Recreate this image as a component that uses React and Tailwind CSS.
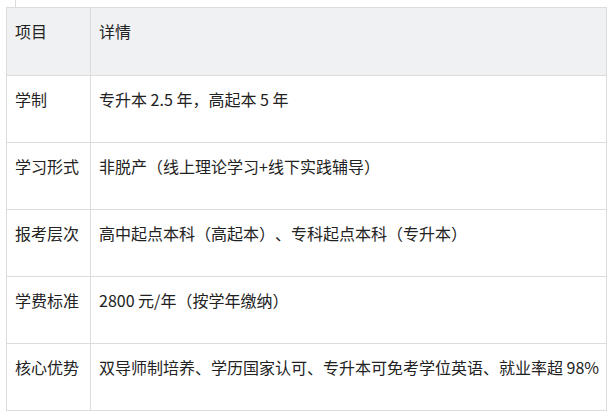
const rows = [
  ['学制', '专升本 2.5 年，高起本 5 年'],
  ['学习形式', '非脱产（线上理论学习+线下实践辅导）'],
  ['报考层次', '高中起点本科（高起本）、专科起点本科（专升本）'],
  ['学费标准', '2800 元/年（按学年缴纳）'],
  ['核心优势', '双导师制培养、学历国家认可、专升本可免考学位英语、就业率超 98%'],
];

export default function App() {
  return (
    <div className="w-[611px] h-[415px] bg-white text-[#222] text-[16px] leading-[24px] font-['Noto_Sans_CJK_SC','Noto_Sans',sans-serif] [text-spacing-trim:space-all] overflow-hidden">
      <div className="ml-[15px] w-px h-[7px] bg-[#dcdcdc]" />
      <div className="ml-[6px] w-[601px] border-l border-t border-r border-[#dcdcdc]">
        <div className="flex h-[68px] border-b border-[#dcdcdc] bg-[#f0f1f3]">
          <div className="w-[84px] shrink-0 border-r border-[#dcdcdc] pl-2 pt-[11px]">项目</div>
          <div className="flex-1 pl-2 pt-[11px]">详情</div>
        </div>
        {rows.map(([k, v]) => (
          <div key={k} className="flex h-[67px] border-b border-[#dcdcdc]">
            <div className="w-[84px] shrink-0 border-r border-[#dcdcdc] pl-2 pt-[11px] whitespace-nowrap">{k}</div>
            <div className="flex-1 pl-2 pt-[11px] whitespace-nowrap">{v}</div>
          </div>
        ))}
      </div>
    </div>
  );
}
